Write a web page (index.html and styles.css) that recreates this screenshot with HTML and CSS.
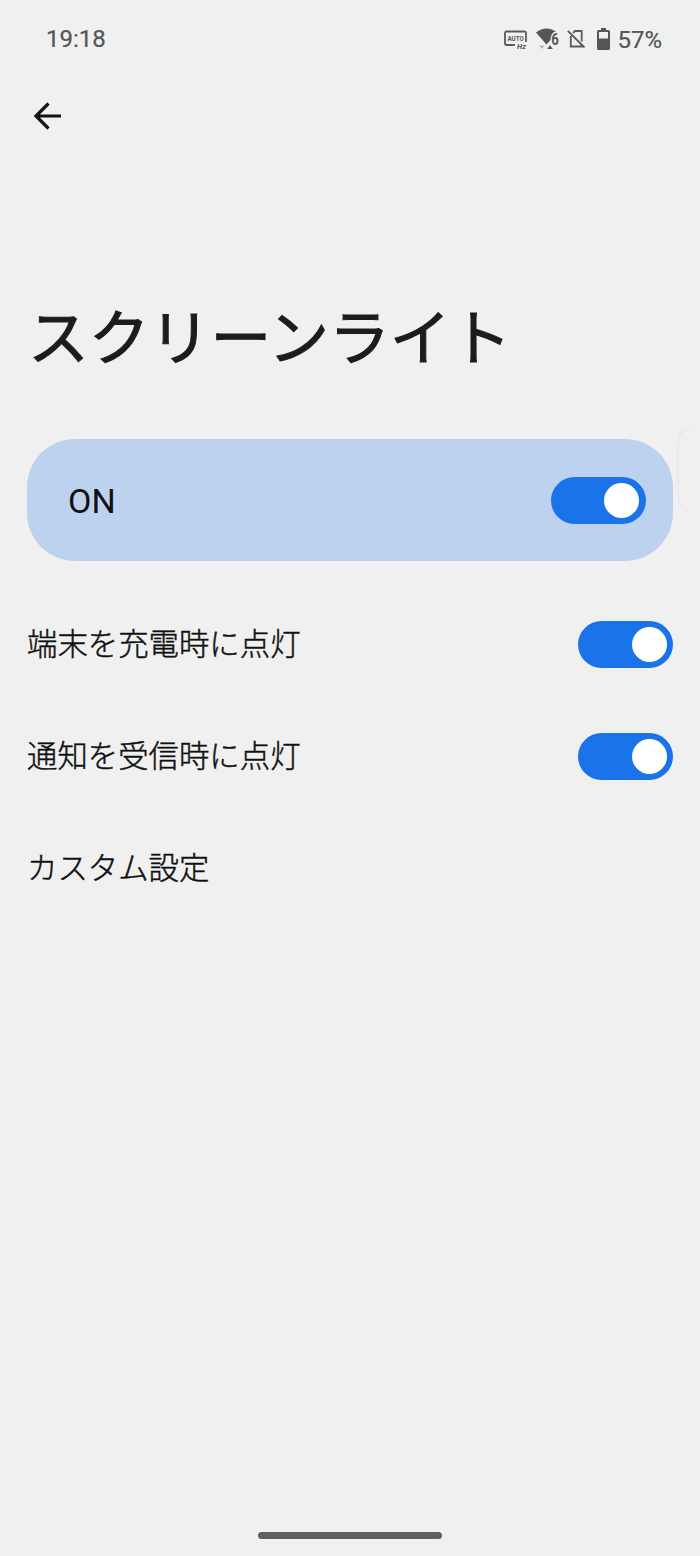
FILE: index.html
```html
<!DOCTYPE html>
<html lang="ja">
<head>
<meta charset="utf-8">
<title>スクリーンライト</title>
<link rel="stylesheet" href="styles.css">
</head>
<body>
<div class="screen">
  <div class="status">
    <span class="clock">19:18</span>
    <svg class="status-icons" width="110" height="28" viewBox="0 0 110 28">
      <g fill="none" stroke="#5a5a5a" stroke-width="1.8">
        <path d="M15 20H6.500Q5 20 5 18.500V8Q5 6.500 6.500 6.500H24.500Q26 6.500 26 8V17"/>
        <path d="M70.800 11V21.500H81.700V19M73 8L75 6H81.700V16.500M67.800 5.800L84.500 22.500"/>
      </g>
      <g fill="#555">
        <text class="auto" x="7.500" y="16.300" textLength="16.200" lengthAdjust="spacingAndGlyphs">AUTO</text>
        <text class="hertz" x="17" y="24.300">Hz</text>
        <path d="M36 7.500Q46.500 -.5 57 7.500L46.500 19.500Z"/>
        <text class="generation" x="51.300" y="20" textLength="7.600" lengthAdjust="spacingAndGlyphs">6</text>
        <path d="M47.200 24L50 20L52.800 24Z"/>
        <path fill="#b5b5b5" d="M39.500 20.500L42 24L44.500 20.500Z"/>
        <path fill-rule="evenodd" d="M101 3H106V5H108.500Q110 5 110 6.500V23.500Q110 25 108.500 25H98.500Q97 25 97 23.500V6.500Q97 5 98.500 5H101ZM99 7V13.500H108V7Z"/>
      </g>
    </svg>
    <span class="percent">57%</span>
  </div>
  <div class="toolbar">
    <svg width="30" height="30" viewBox="0 0 30 30" fill="none" stroke="#111" stroke-width="3.2"><path d="M28 15H3M15.500 2.500L3 15L15.500 27.500"/></svg>
  </div>
  <h1 class="title">スクリーンライト</h1>
  <div class="main-switch">
    <span class="main-label">ON</span>
    <span class="toggle"><span class="thumb"></span></span>
  </div>
  <div class="list">
    <div class="row"><span class="label">端末を充電時に点灯</span><span class="toggle"><span class="thumb"></span></span></div>
    <div class="row"><span class="label">通知を受信時に点灯</span><span class="toggle"><span class="thumb"></span></span></div>
    <div class="row"><span class="label">カスタム設定</span></div>
  </div>
  <div class="home-bar"></div>
  <svg class="edge-handle" width="16" height="90" viewBox="0 0 16 90"><path d="M15 2Q2 6 2 20V70Q2 84 15 88" fill="none" stroke="#eaeaea" stroke-width="2"/></svg>
</div>
</body>
</html>
```
FILE: styles.css
```css
body {
  margin: 0;
  background: #f0f0f0;
  color: #111;
  font-family: Roboto, "Noto Sans CJK JP", sans-serif;
}
.screen {
  position: relative;
  box-sizing: border-box;
  width: 700px;
  height: 1556px;
  padding: 25px 27px 17px;
  display: flex;
  flex-direction: column;
}
.status {
  display: flex;
  align-items: center;
  height: 28px;
  padding: 0 11px 0 19px;
  color: #555;
  font-size: 24px;
  line-height: 28px;
  -webkit-text-stroke: 0.2px #555;
}
.clock {
  flex: 1;
}
.percent {
  padding-top: 2px;
}
.status-icons {
  margin-right: 7px;
  -webkit-text-stroke: 0;
}
.auto {
  font: 700 8px Roboto, sans-serif;
}
.hertz {
  font: italic 700 7.500px Roboto, sans-serif;
}
.generation {
  font: 700 16px Roboto, sans-serif;
  stroke: #f0f0f0;
  stroke-width: 3px;
  paint-order: stroke;
}
.toolbar {
  height: 30px;
  margin-top: 48px;
  padding-left: 6px;
}
.title {
  margin: 158px 0 0 1px;
  height: 90px;
  font: 400 60.800px/90px "Noto Sans CJK JP", sans-serif;
  color: #1c1c1c;
  -webkit-text-stroke: 1px #1c1c1c;
}
.main-switch {
  display: flex;
  align-items: center;
  justify-content: space-between;
  height: 122px;
  margin-top: 60px;
  padding: 0 27.500px 0 41px;
  border-radius: 48px;
  background: #bdd2ef;
}
.main-label {
  padding-top: 2px;
  font-size: 34px;
}
.toggle {
  display: flex;
  align-items: center;
  justify-content: flex-end;
  box-sizing: border-box;
  width: 95px;
  height: 47px;
  padding-right: 6.500px;
  border-radius: 24px;
  background: #1a73e8;
}
.thumb {
  width: 35px;
  height: 35px;
  border-radius: 50%;
  background: #fff;
}
.list {
  flex: 1;
  padding-top: 27.400px;
}
.row {
  display: flex;
  align-items: center;
  justify-content: space-between;
  height: 112px;
  font: 300 30.400px/44px "Noto Sans CJK JP", sans-serif;
}
.label {
  padding-bottom: 5px;
  -webkit-text-stroke: 0.45px #111;
}
.home-bar {
  align-self: center;
  width: 184px;
  height: 7px;
  border-radius: 4px;
  background: #606060;
}
.edge-handle {
  position: absolute;
  top: 425px;
  right: 8px;
}
```
